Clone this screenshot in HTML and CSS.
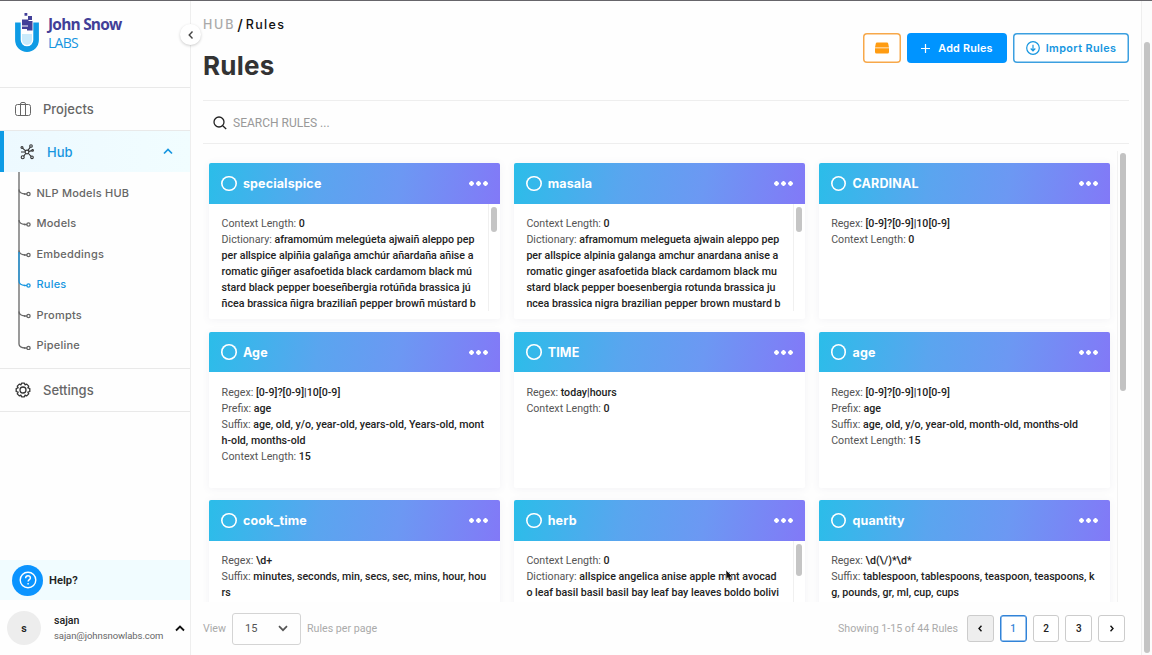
FILE: index.html
```html
<!DOCTYPE html>
<html lang="en">
<head>
<meta charset="utf-8">
<title>Rules</title>
<link rel="stylesheet" href="styles.css">
</head>
<body>
<div class="app">
  <aside class="sidebar">
    <div class="brand">
      <svg class="brand-mark" width="24" height="42" viewBox="0 0 24 42">
        <path d="M2.900 10.500v17.500a9.100 9.100 0 0 0 18.200 0V10.500" fill="none" stroke="#0e9be5" stroke-width="5.600"/>
        <path d="M7 22h10v6a5 5 0 0 1-10 0z" fill="#c9eafb"/>
        <path d="M9.500 1h2.800v2.800H9.500zM13 4h4v4h-4zM7 7.500h6.500v6H7zM13 9h4.500v9.500H12v-4h1zM7 14.500h5V17H7z" fill="#423f98"/>
      </svg>
      <div class="brand-text"><span class="brand-name">John Snow</span><span class="brand-sub">LABS</span></div>
    </div>
    <div class="collapse"><svg width="8" height="10" viewBox="0 0 8 10"><path d="M5.500 1.500 2.200 5l3.300 3.500" fill="none" stroke="#444" stroke-width="1.400"/></svg></div>
    <a class="nav-item projects">
      <svg width="16" height="14" viewBox="0 0 16 14" fill="none" stroke="#666" stroke-width="1"><rect x=".5" y="2.500" width="15" height="11" rx="2"/><path d="M5.500 13.500V2Q5.500.5 7 .5h2q1.500 0 1.500 1.500v11.500"/></svg>
      <span>Projects</span>
    </a>
    <a class="nav-item hub">
      <svg width="14" height="16" viewBox="0 0 14 16" fill="none" stroke="#333" stroke-width="1.100"><circle cx="7" cy="8" r="1.900"/><circle cx="2" cy="3.500" r="1"/><circle cx="11" cy="2" r="1.300"/><circle cx="12.600" cy="6.400" r=".8"/><circle cx="2.700" cy="13.300" r="1.500"/><circle cx="12" cy="13.300" r="1.300"/><path d="m2.800 4.300 2.800 2.500M10.300 3.100 8 6.400m.9 1 3-.8M5.700 9.500l-2 2.600m4.700-2.600 2.700 2.900M1 8l4 0"/></svg>
      <span>Hub</span>
      <svg class="chev" width="10" height="7" viewBox="0 0 10 7"><path d="M1 5.500 5 1.500l4 4" fill="none" stroke="#1696e0" stroke-width="1.700"/></svg>
    </a>
    <div class="subnav">
      <svg class="tree" width="14" height="178" viewBox="0 0 14 178" fill="none" stroke="#666" stroke-width="1.300">
        <path d="M1 0V172q0 3.500 6 4"/>
        <path d="M1 17.500q0 4 6 4.500M1 48q0 4 6 4.500M1 78.500q0 4 6 4.500M1 139.500q0 4 6 4.500"/>
        <path stroke="#1696e0" d="M1 80v29q0 4 6 4.500"/>
        <g fill="#fff"><circle cx="10.500" cy="22" r="1.600"/><circle cx="10.500" cy="52.500" r="1.600"/><circle cx="10.500" cy="83" r="1.600"/><circle cx="10.500" cy="144" r="1.600"/><circle cx="10.500" cy="176" r="1.600"/><circle cx="10.500" cy="113.500" r="1.600" stroke="#1696e0"/></g>
        <path d="M6 22h3M6 52.500h3M6 83h3M6 144h3M6 176h3"/><path d="M6 113.500h3" stroke="#1696e0"/>
      </svg>
      <ul class="sublist">
        <li>NLP Models HUB</li><li>Models</li><li>Embeddings</li><li class="current">Rules</li><li>Prompts</li><li>Pipeline</li>
      </ul>
    </div>
    <a class="nav-item settings">
      <svg width="16" height="16" viewBox="0 0 16 16" fill="none" stroke="#333" stroke-width="1.300"><circle cx="8" cy="8" r="3"/><path d="M6.600 1.100h2.800l.6 1.700 1.700-.7 2 2-.8 1.700 1.900.7v3l-1.900.7.8 1.700-2 2-1.700-.8-.6 1.800H6.600L6 13.100l-1.700.8-2-2 .8-1.700-1.900-.7v-3l1.900-.7-.8-1.700 2-2 1.700.7z" stroke-linejoin="round"/></svg>
      <span>Settings</span>
    </a>
    <div class="spacer"></div>
    <div class="help">
      <span class="help-icon"><svg width="18" height="18" viewBox="0 0 18 18" fill="none" stroke="#fff" stroke-width="1.400"><circle cx="9" cy="9" r="7.800"/><path d="M6.600 7.200Q6.700 4.800 9 4.800t2.400 2.100c0 1.700-2.300 1.700-2.300 3.600M9.100 12v1.500"/></svg></span>
      <b>Help?</b>
    </div>
    <div class="user">
      <span class="avatar">s</span>
      <div class="user-text"><span class="user-name">sajan</span><span class="user-mail">sajan@johnsnowlabs.com</span></div>
      <svg width="10" height="7" viewBox="0 0 10 7"><path d="M1 5.500 5 1.500l4 4" fill="none" stroke="#111" stroke-width="1.800"/></svg>
    </div>
  </aside>

  <main class="main">
    <header class="head">
      <div>
        <div class="crumbs"><span class="crumb-hub">HUB</span><span class="crumb-sep">/</span><span class="crumb-here">Rules</span></div>
        <h1>Rules</h1>
      </div>
      <div class="actions">
        <button class="btn drive"><svg width="14" height="12" viewBox="0 0 14 12" fill="#ff9c12"><path d="M2 .5h10q1 0 1.200 1l.8 4H0l.8-4Q1 .5 2 .5zM0 6.200h14V10q0 1.500-1.500 1.500h-11Q0 11.500 0 10z"/></svg></button>
        <button class="btn add"><svg width="9" height="9" viewBox="0 0 9 9" stroke="#fff" stroke-width="1.200"><path d="M4.500 0v9M0 4.500h9"/></svg><span>Add Rules</span></button>
        <button class="btn import"><svg width="14" height="14" viewBox="0 0 14 14" fill="none" stroke="#1696e0" stroke-width="1.200"><circle cx="7" cy="7" r="6.300"/><path d="M7 3.700v6M4.700 7.500 7 9.800l2.300-2.300"/></svg><span>Import Rules</span></button>
      </div>
    </header>
    <div class="search">
      <svg width="14" height="14" viewBox="0 0 14 14" fill="none" stroke="#222" stroke-width="1.300"><circle cx="6" cy="6" r="5"/><path d="m9.700 9.700 3.500 3.300"/></svg>
      <span>SEARCH RULES ...</span>
    </div>
    <div class="scroller">
      <div class="grid">
        <section class="card">
          <h2><i class="ring"></i><span>specialspice</span><i class="dots"></i></h2>
          <div class="card-body"><p>Context Length: <b>0</b><br>Dictionary: <b>aframomúm melegúeta ajwaiñ aleppo pep<br>per allspice alpiñia galañga amchúr añardaña añise a<br>romatic giñger asafoetida black cardamom black mú<br>stard black pepper boeseñbergia rotúñda brassica jú<br>ñcea brassica ñigra braziliañ pepper browñ mústard b</b></p><div class="bar"><span class="bar-thumb"></span></div></div>
        </section>
        <section class="card">
          <h2><i class="ring"></i><span>masala</span><i class="dots"></i></h2>
          <div class="card-body"><p>Context Length: <b>0</b><br>Dictionary: <b>aframomum melegueta ajwain aleppo pep<br>per allspice alpinia galanga amchur anardana anise a<br>romatic ginger asafoetida black cardamom black mu<br>stard black pepper boesenbergia rotunda brassica ju<br>ncea brassica nigra brazilian pepper brown mustard b</b></p><div class="bar"><span class="bar-thumb"></span></div></div>
        </section>
        <section class="card">
          <h2><i class="ring"></i><span>CARDINAL</span><i class="dots"></i></h2>
          <div class="card-body"><p>Regex: <b>[0-9]?[0-9]|10[0-9]</b><br>Context Length: <b>0</b></p></div>
        </section>
        <section class="card">
          <h2><i class="ring"></i><span>Age</span><i class="dots"></i></h2>
          <div class="card-body"><p>Regex: <b>[0-9]?[0-9]|10[0-9]</b><br>Prefix: <b>age</b><br>Suffix: <b>age, old, y/o, year-old, years-old, Years-old, mont<br>h-old, months-old</b><br>Context Length: <b>15</b></p></div>
        </section>
        <section class="card">
          <h2><i class="ring"></i><span>TIME</span><i class="dots"></i></h2>
          <div class="card-body"><p>Regex: <b>today|hours</b><br>Context Length: <b>0</b></p></div>
        </section>
        <section class="card">
          <h2><i class="ring"></i><span>age</span><i class="dots"></i></h2>
          <div class="card-body"><p>Regex: <b>[0-9]?[0-9]|10[0-9]</b><br>Prefix: <b>age</b><br>Suffix: <b>age, old, y/o, year-old, month-old, months-old</b><br>Context Length: <b>15</b></p></div>
        </section>
        <section class="card">
          <h2><i class="ring"></i><span>cook_time</span><i class="dots"></i></h2>
          <div class="card-body"><p>Regex: <b>\d+</b><br>Suffix: <b>minutes, seconds, min, secs, sec, mins, hour, hou<br>rs</b></p></div>
        </section>
        <section class="card">
          <h2><i class="ring"></i><span>herb</span><i class="dots"></i></h2>
          <div class="card-body"><p>Context Length: <b>0</b><br>Dictionary: <b>allspice angelica anise apple mint avocad<br>o leaf basil basil basil bay leaf bay leaves boldo bolivi</b></p><div class="bar"><span class="bar-thumb tall"></span></div></div>
        </section>
        <section class="card">
          <h2><i class="ring"></i><span>quantity</span><i class="dots"></i></h2>
          <div class="card-body"><p>Regex: <b>\d(\/)*\d*</b><br>Suffix: <b>tablespoon, tablespoons, teaspoon, teaspoons, k<br>g, pounds, gr, ml, cup, cups</b></p></div>
        </section>
      </div>
      <div class="track"><span class="thumb"></span></div>
    </div>
    <footer class="foot">
      <span class="muted">View</span>
      <div class="select"><span>15</span><svg width="10" height="7" viewBox="0 0 10 7"><path d="M1 1.200 5 5.200l4-4" fill="none" stroke="#555" stroke-width="1.700"/></svg></div>
      <span class="muted">Rules per page</span>
      <span class="muted showing">Showing 1-15 of 44 Rules</span>
      <div class="pages">
        <span class="page off"><svg width="4" height="7" viewBox="0 0 4 7"><path d="M3.500.7 1 3.500l2.500 2.800" fill="none" stroke="#111" stroke-width="1.400"/></svg></span>
        <span class="page on">1</span><span class="page">2</span><span class="page">3</span>
        <span class="page"><svg width="4" height="7" viewBox="0 0 4 7"><path d="M.5.7 3 3.500.5 6.300" fill="none" stroke="#111" stroke-width="1.400"/></svg></span>
      </div>
    </footer>
  </main>
  <div class="page-track"><span class="page-thumb"></span></div>
  <svg class="cursor" width="10" height="14" viewBox="0 0 10 14"><path d="M1 1v9.500l2.100-2 1.500 3.500 1.900-.8L5 7.900h3z" fill="#111" stroke="#fff" stroke-width=".6"/></svg>
</div>
</body>
</html>
```
FILE: styles.css
```css
* { box-sizing: border-box; }
body { margin: 0; font-family: Roboto, "Liberation Sans", sans-serif; font-size: 10.65px; color: #222; background: #fefefe; }
b { font-weight: 500; }
.app { position: relative; display: flex; width: 1152px; height: 655px; border-top: 1px solid #66656a; overflow: hidden; }

.sidebar { position: relative; display: flex; flex-direction: column; width: 191px; flex: none; border-right: 1px solid #eee; }
.brand { display: flex; gap: 9px; height: 87px; padding: 11px 0 0 15px; border-bottom: 1px solid #e9e9e9; }
.brand-text { display: flex; flex-direction: column; font-family: "Open Sans", sans-serif; }
.brand-name { margin-top: 1px; font-size: 15.5px; line-height: 22px; font-weight: 700; letter-spacing: -.8px; color: #423f98; }
.brand-sub { font-size: 14px; line-height: 16px; letter-spacing: -.7px; color: #1696e0; }
.collapse { position: absolute; left: 180px; top: 23px; display: grid; place-items: center; width: 21px; height: 21px; border-radius: 50%; background: #fff; box-shadow: 0 1px 3px #0003; z-index: 2; }
.nav-item { display: flex; align-items: center; flex: none; font: 500 13px Inter, sans-serif; color: #666; }
.projects { height: 43px; padding-left: 15px; gap: 12px; border-bottom: 1px solid #e9e9e9; }
.hub { height: 41px; padding: 0 17px 0 16px; gap: 13px; border-left: 4px solid #0e9be5; background: linear-gradient(90deg, #edf9ff, #f1fdff); color: #1696e0; }
.chev { margin-left: auto; }
.subnav { display: flex; flex: none; gap: 4.500px; height: 197px; padding-left: 18px; border-bottom: 1px solid #e9e9e9; }
.sublist { margin: 5.600px 0 0; padding: 0; list-style: none; font: 500 11px/30.5px Inter, sans-serif; letter-spacing: .22px; color: #666; }
.sublist .current { color: #1696e0; }
.settings { height: 43px; padding-left: 15px; gap: 12px; border-bottom: 1px solid #e9e9e9; }
.spacer { flex: 1; }
.help { display: flex; align-items: center; gap: 6px; height: 40px; margin-bottom: 1px; padding-left: 12px; background: #f1fcff; font-size: 11.2px; }
.help b { font-weight: 600; }
.help-icon { display: grid; place-items: center; width: 31px; height: 31px; border-radius: 50%; background: #0a94ff; }
.user { display: flex; align-items: center; height: 54px; padding: 0 5px 0 7px; }
.avatar { display: grid; place-items: center; width: 34px; height: 34px; margin-right: 13px; border-radius: 50%; background: #ededed; font-weight: 600; }
.user-text { display: flex; flex-direction: column; flex: 1; line-height: 15px; }
.user-name { font-size: 10.6px; font-weight: 500; }
.user-mail { font-size: 9.5px; letter-spacing: -.08px; color: #666; }

.main { display: flex; flex-direction: column; width: 950px; padding: 0 12px; }
.head { display: flex; justify-content: space-between; height: 99px; flex: none; }
.crumbs { display: flex; align-items: center; height: 20px; margin-top: 14px; font: 500 12.5px/20px Inter, sans-serif; letter-spacing: 1.350px; color: #111; }
.crumb-hub { color: #aaa; letter-spacing: 1.800px; }
.crumb-sep { margin: 0 3px 0 2px; font-size: 15px; letter-spacing: 0; }
h1 { margin: 15px 0 0; font: 700 26px/32px Inter, sans-serif; letter-spacing: .25px; color: #333; }
.actions { display: flex; gap: 6px; margin: 32px 0 0; }
.btn { display: flex; align-items: center; justify-content: center; height: 30px; padding: 0; border: 0; border-radius: 4px; font: 600 10.8px Inter, sans-serif; background: #fff; }
.drive { width: 38px; box-shadow: inset 0 0 0 1.500px #f7a84a; }
.add { width: 100px; gap: 8px; background: #0094ff; color: #fff; letter-spacing: .2px; }
.import { width: 116px; gap: 6px; box-shadow: inset 0 0 0 1.500px #3b9fe0; color: #1696e0; letter-spacing: .4px; }
.search { display: flex; align-items: center; gap: 6.500px; height: 44px; flex: none; padding: 1px 0 0 9.500px; border-top: 1px solid #eee; border-bottom: 1px solid #eee; color: #999; font-size: 12px; }

.scroller { display: flex; height: 458px; flex: none; overflow: hidden; }
.grid { display: grid; grid-template-columns: repeat(3, 291px); grid-auto-rows: 156px; gap: 12.500px 13.800px; flex: none; padding: 19.400px 3.100px 0 6.400px; }
.card { border-radius: 2px; background: #fff; box-shadow: 0 1px 9px #50508012; }
h2 { display: flex; align-items: center; height: 40.300px; margin: 0; padding: 0 12px; border-radius: 2px 2px 0 0; background: linear-gradient(100deg, #2bbde9 0%, #5aa5ef 38%, #6c98f3 65%, #8279f7 100%); color: #fff; font: 700 12.500px Inter, sans-serif; letter-spacing: .15px; }
.ring { width: 15.500px; height: 15.500px; margin-right: 6px; border-radius: 50%; box-shadow: inset 0 0 0 1.600px #fff; }
.dots { width: 19px; height: 5px; margin-left: auto; background: radial-gradient(circle at 2.500px 2.500px, #fff 2px, transparent 2.500px) 0 0 / 7px 5px; }
.card-body { display: flex; justify-content: space-between; height: 107px; padding: 12.500px 2px 0 12.200px; }
.card-body p { margin: 0; line-height: 16px; white-space: nowrap; color: #555; }
.card-body b { color: #222; }
.bar { width: 10px; height: 107px; flex: none; margin-top: -12.500px; padding: 3px 0 0 2px; border-left: 1px solid #f0f0f0; }
.bar-thumb { display: block; width: 6px; height: 25px; border-radius: 3px; background: #c5c5c5; }
.bar-thumb.tall { height: 32px; }
.track { width: 10px; margin-top: 7px; margin-left: 4px; border-left: 1px solid #f2f2f2; padding: 2px 0 0 2px; }
.thumb { display: block; width: 6px; height: 238px; border-radius: 3px; background: #c2c2c2; }
.foot { display: flex; align-items: center; height: 53px; }
.muted { color: #aaa; font-size: 10.65px; }
.select { display: flex; align-items: center; justify-content: space-between; width: 69px; height: 32px; margin: 0 6px; padding: 0 12px; border: 1px solid #d4d4d4; border-radius: 3px; color: #555; font-size: 11px; }
.showing { margin-left: auto; }
.pages { display: flex; gap: 6px; margin-left: 9px; padding-right: 4px; }
.page { display: grid; place-items: center; width: 26.800px; height: 27px; border: 1px solid #ccc; border-radius: 3px; background: #fff; font-size: 10px; font-weight: 500; }
.page.off { background: #eee; }
.page.on { border-color: #3183d8; box-shadow: inset 0 0 0 .5px #3183d8; color: #3183d8; }
.page-track { width: 11px; border-left: 1px solid #eee; padding: 41px 0 0 2px; background: #fcfcfc; }
.page-thumb { display: block; width: 6px; height: 611px; border-radius: 3px; background: #c4c4c4; }
.cursor { position: absolute; left: 725px; top: 568px; }
```
